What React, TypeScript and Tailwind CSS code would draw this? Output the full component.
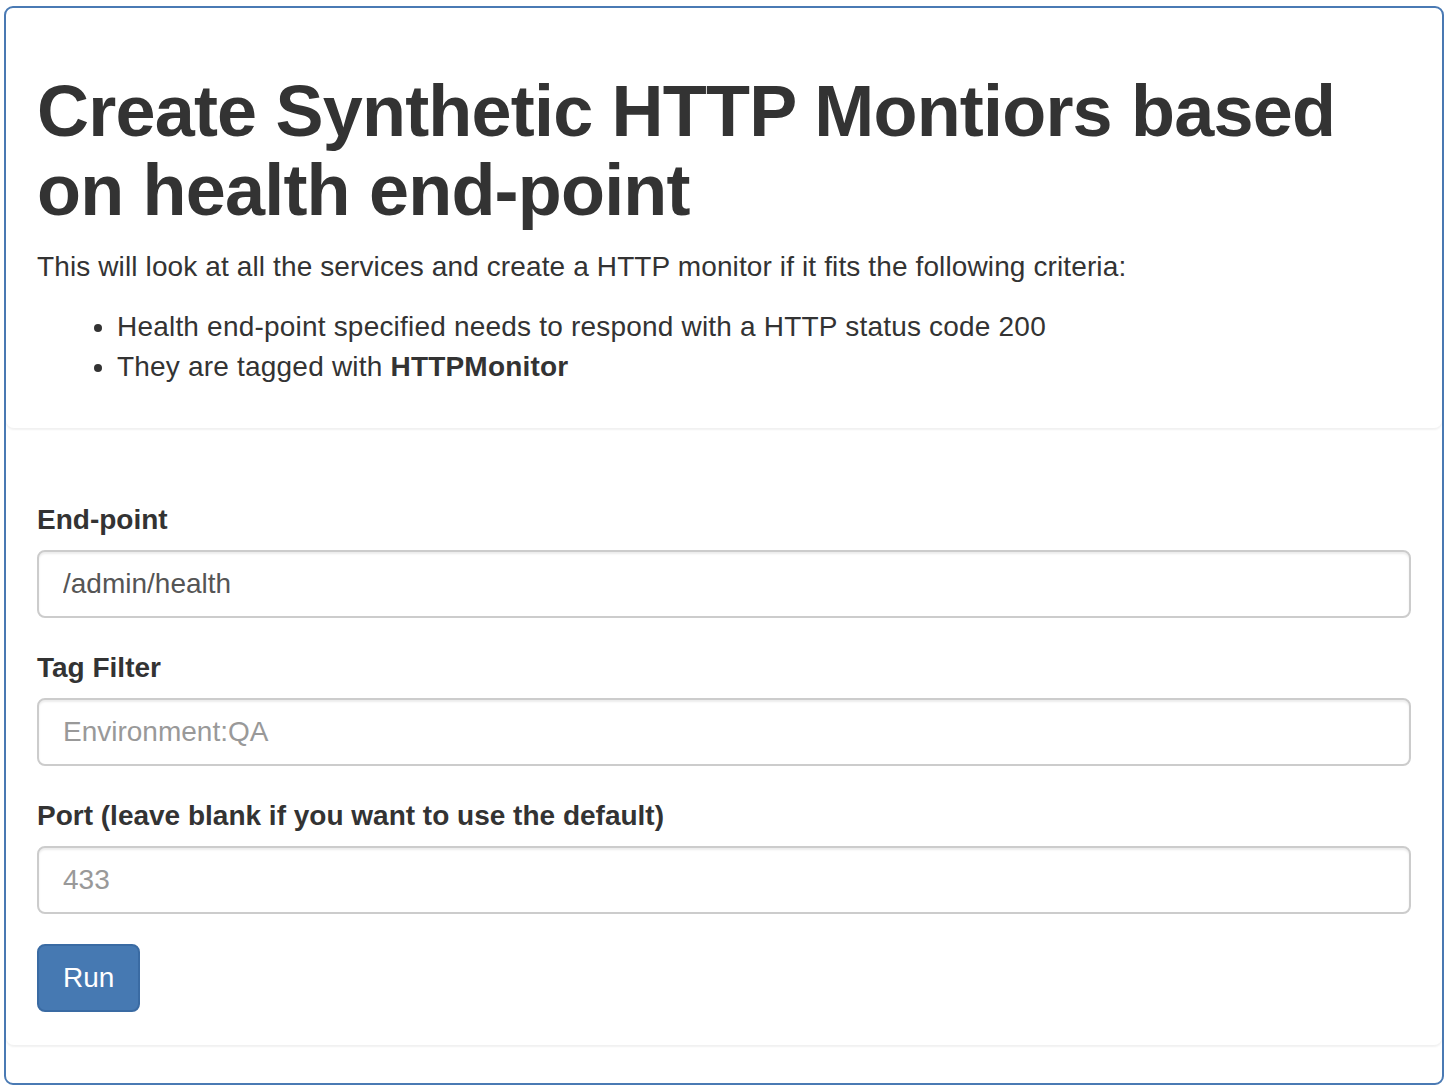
import React from "react";

export default function App() {
  return (
    <div className="w-[1448px] min-h-[1090px] bg-white pt-[6px] px-[4px] font-['Liberation_Sans',Arial,sans-serif] text-[#333]">
      <div className="w-[1440px] border-2 border-[#4a7ab4] rounded-[9px] pb-[38px]">
        <div className="mb-[2px] rounded-[8px] border border-transparent shadow-[0_2px_2px_rgba(0,0,0,0.06)] px-[30px] pt-[30px] pb-[30px]">
          <h1 className="mt-[33px] mb-[17px] text-[72px] leading-[1.1] font-bold tracking-[-0.8px]">
            Create Synthetic HTTP Montiors based on health end-point
          </h1>
          <p className="text-[28px] leading-[40px] mb-[20px] tracking-[0.12px]">
            This will look at all the services and create a HTTP monitor if it fits the following criteria:
          </p>
          <ul className="list-disc pl-[80px] text-[28px] leading-[40px] mb-[10px] tracking-[0.2px]">
            <li>Health end-point specified needs to respond with a HTTP status code 200</li>
            <li>
              They are tagged with <strong className="font-bold">HTTPMonitor</strong>
            </li>
          </ul>
        </div>
        <div className="mt-[41px] rounded-[8px] border border-transparent shadow-[0_2px_2px_rgba(0,0,0,0.06)] p-[30px] pb-[32px]">
          <form className="flex flex-col" onSubmit={(e) => e.preventDefault()}>
            <div className="mb-[30px]">
              <label className="block text-[28px] leading-[40px] font-bold mb-[10px]">End-point</label>
              <input
                defaultValue="/admin/health"
                className="block w-full h-[68px] px-[24px] py-[12px] text-[28px] leading-[40px] text-[#555] bg-white border-2 border-[#ccc] rounded-[8px] shadow-[inset_0_2px_2px_rgba(0,0,0,0.075)] outline-none"
              />
            </div>
            <div className="mb-[30px]">
              <label className="block text-[28px] leading-[40px] font-bold mb-[10px]">Tag Filter</label>
              <input
                placeholder="Environment:QA"
                className="block w-full h-[68px] px-[24px] py-[12px] text-[28px] leading-[40px] text-[#555] placeholder:text-[#999] bg-white border-2 border-[#ccc] rounded-[8px] shadow-[inset_0_2px_2px_rgba(0,0,0,0.075)] outline-none"
              />
            </div>
            <div className="mb-[30px]">
              <label className="block text-[28px] leading-[40px] font-bold mb-[10px]">
                Port (leave blank if you want to use the default)
              </label>
              <input
                placeholder="433"
                className="block w-full h-[68px] px-[24px] py-[12px] text-[28px] leading-[40px] text-[#555] placeholder:text-[#999] bg-white border-2 border-[#ccc] rounded-[8px] shadow-[inset_0_2px_2px_rgba(0,0,0,0.075)] outline-none"
              />
            </div>
            <div>
              <button
                type="submit"
                className="h-[68px] px-[24px] text-[28px] leading-[40px] text-white bg-[#4679b2] border-2 border-[#3a6ba3] rounded-[8px]"
              >
                Run
              </button>
            </div>
          </form>
        </div>
      </div>
    </div>
  );
}
